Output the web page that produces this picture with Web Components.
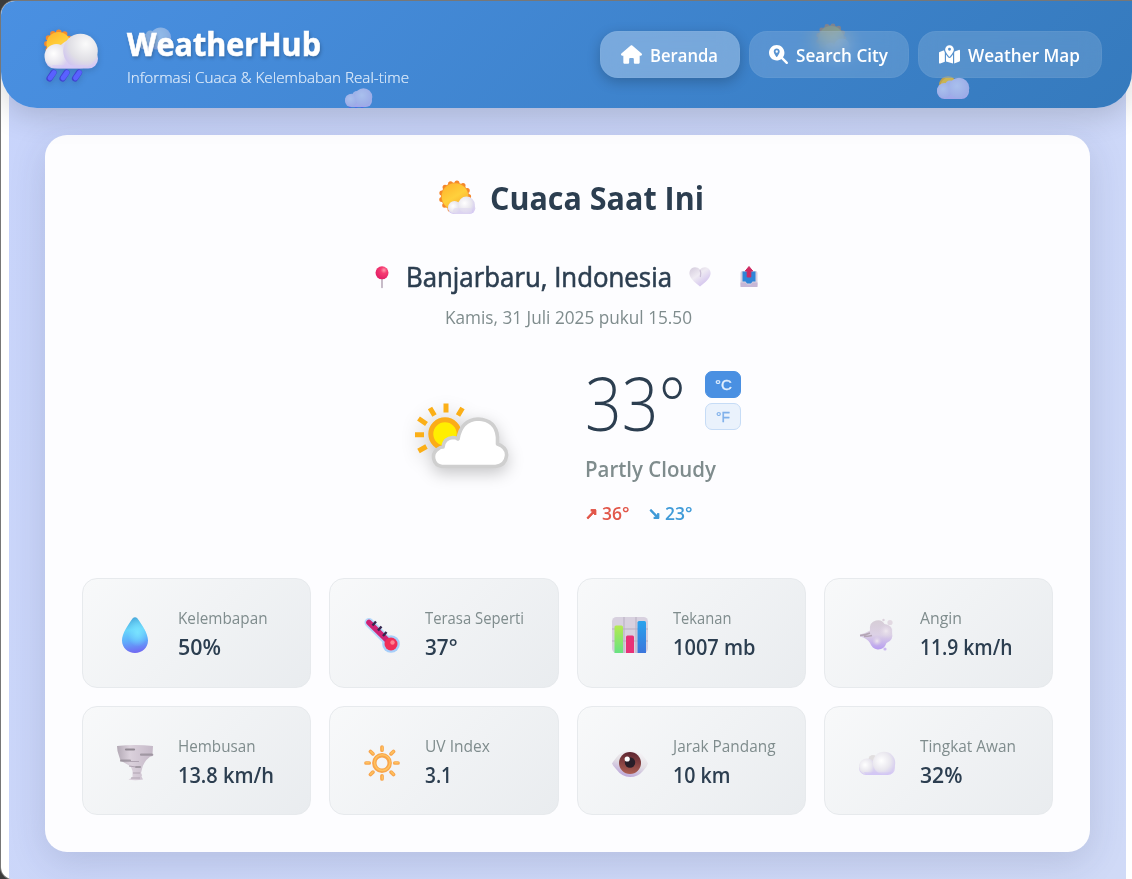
<!DOCTYPE html>
<html lang="id">
<head>
<meta charset="utf-8">
<title>WeatherHub</title>
<style>
html{background:#3b3b3b}
body{margin:0;height:879px;overflow:hidden;font-family:"Open Sans","Noto Sans",sans-serif;color:#2c3e50}
</style>
</head>
<body>
<weather-app></weather-app>
<script>
const define = (name, html, ready) => {
  const t = document.createElement('template');
  t.innerHTML = html;
  customElements.define(name, class extends HTMLElement {
    connectedCallback() {
      if (this.shadowRoot) return;
      this.attachShadow({mode: 'open'}).append(t.content.cloneNode(true));
      if (ready) ready(this, this.shadowRoot);
    }
  });
};

const cloudDefs = `<defs>
<radialGradient id="c1" cx=".38" cy=".4" r=".75"><stop offset="0" stop-color="#fff"/><stop offset=".55" stop-color="#e9e7ee"/><stop offset="1" stop-color="#cfc3f0"/></radialGradient>
<radialGradient id="c2" cx=".65" cy=".3" r=".8"><stop offset="0" stop-color="#fbfbfb"/><stop offset=".6" stop-color="#e0dfe5"/><stop offset="1" stop-color="#cdc0f2"/></radialGradient>
<linearGradient id="cb" x1="0" y1="0" x2="0" y2="1"><stop offset="0" stop-color="#e5e3ea"/><stop offset="1" stop-color="#d3c5f5"/></linearGradient>
<linearGradient id="s" x1=".2" y1="0" x2=".8" y2="1"><stop offset="0" stop-color="#ffb52c"/><stop offset=".5" stop-color="#ffd03c"/><stop offset="1" stop-color="#f8a52b"/></linearGradient></defs>`;

const hazeDefs = `<defs><linearGradient id="z" x2="0" y2="1"><stop stop-color="#a6bdea"/><stop offset="1" stop-color="#a0a6ea"/></linearGradient><radialGradient id="z1" cx=".4" cy=".4" r=".7"><stop stop-color="#a9c0ed"/><stop offset="1" stop-color="#9aa9e6"/></radialGradient></defs>`;

const ICONS = {
  rain: ['0 0 54 54', `${cloudDefs}
    <circle cx="14.5" cy="15" r="11.600" fill="none" stroke="#f58a2c" stroke-width="5.600" stroke-linecap="round" stroke-dasharray="0 6.070"/><circle cx="14.5" cy="15" r="12" fill="url(#s)"/>
    <path d="M12 24C17 12 26 8 37 12V39H10Z" fill="url(#cb)"/><rect x="1" y="20" width="53" height="19.5" rx="9.7" fill="url(#cb)"/>
    <circle cx="12.5" cy="27" r="12" fill="url(#c1)"/><circle cx="36.5" cy="22" r="17.3" fill="url(#c2)"/><path d="M8 36h36q-6 3.5-11 3.5H14q-4 0-6-3.5Z" fill="#d6c8f7" opacity=".55"/>
    <g stroke="#3f43cf" stroke-width="6.2" stroke-linecap="round"><path d="M9.500 43.500l-4 6M22.500 43.500l-4 6M35 43.500l-4 6"/></g><g stroke="#5961ff" stroke-width="4.800" stroke-linecap="round"><path d="M10 43.500l-4 5.500M23 43.500l-4 5.500M35.500 43.500l-4 5.500"/></g>`],
  'haze-rain': ['0 0 28 28', `${hazeDefs}<rect x="0" y="6.500" width="27" height="12.500" rx="6.200" fill="url(#z)"/><circle cx="12" cy="8" r="5" fill="#9db2e8"/><circle cx="6.500" cy="12" r="6.300" fill="url(#z1)"/><circle cx="18.500" cy="9" r="8.800" fill="url(#z1)"/><path d="M5 20.500l-2 3M11 20.500l-2 3M17 20.500l-2 3" stroke="#4c63ea" stroke-width="3" stroke-linecap="round"/>`],
  'haze-sun': ['0 0 32 32', `${hazeDefs}<circle cx="11" cy="14" r="9" fill="#bda04e"/><circle cx="12" cy="15" r="8.500" fill="#c9b455"/><rect x="0" y="13" width="32" height="15" rx="7.500" fill="url(#z)"/><circle cx="13" cy="14.500" r="5" fill="#9db2e8"/><circle cx="7.500" cy="19.500" r="7.500" fill="url(#z1)"/><circle cx="22" cy="17" r="10.300" fill="url(#z1)"/>`],
  sunny: ['0 0 36 36', `${cloudDefs}
    <circle cx="16" cy="17.500" r="13.600" fill="none" stroke="#f5862a" stroke-width="5" stroke-linecap="round" stroke-dasharray="0 6.570"/><circle cx="16" cy="17.500" r="14" fill="#f5932c"/><circle cx="16" cy="17.500" r="13.300" fill="url(#s)"/>
    <rect x="9" y="23.500" width="27.300" height="11.500" rx="5.700" fill="url(#cb)"/><circle cx="15.500" cy="28.300" r="6.300" fill="url(#c1)"/><circle cx="27.500" cy="25.800" r="8.300" fill="url(#c1)"/><rect x="14" y="29" width="19" height="6" rx="3" fill="#e0daef" opacity=".65"/>`],
  cloud: ['0 0 36 36', `${cloudDefs}<rect x="0" y="15.500" width="36" height="14.500" rx="7.200" fill="url(#cb)"/>
    <circle cx="14" cy="14.500" r="4.500" fill="#e1dedf"/><circle cx="8" cy="21.500" r="8" fill="url(#c1)"/><circle cx="25" cy="18" r="11.200" fill="url(#c1)"/><path d="M5 27q13 1 28 0-3 3-7 3H9q-3 0-4-3Z" fill="#d2c6f5" opacity=".6"/>`],
  pin: ['0 0 22 22', `<defs><radialGradient id="p" cx=".65" cy=".3" r=".7"><stop offset="0" stop-color="#ff9aae"/><stop offset=".35" stop-color="#f63c72"/><stop offset="1" stop-color="#e32067"/></radialGradient></defs>
    <path d="M11 12v9.500" stroke="#b9abbb" stroke-width="1.600" stroke-linecap="round"/><circle cx="11" cy="6.800" r="6.500" fill="url(#p)"/>`],
  heart: ['0 0 22 22', `<defs><linearGradient id="h" x1="0" x2=".8" y2="1"><stop stop-color="#d3cadc"/><stop offset=".45" stop-color="#efebf3"/><stop offset="1" stop-color="#cdbbed"/></linearGradient></defs>
    <path d="M11 3.600C8 .300 3 .500 1 4.500-.800 8.500 1 13 11 20.500 21 13 22.800 8.500 21 4.500 19 .500 14 .300 11 3.600Z" fill="url(#h)"/><path d="M11 4c1.300 2.500 1 4.500.3 7" stroke="#cdc2d8" stroke-width="1.300" fill="none"/>`],
  outbox: ['0 0 22 22', `<rect x="2.500" y="5" width="17" height="16" rx="2" fill="#d9d0df"/><path d="M2.500 16.500h5l1.500 2h4l1.500-2h5V21h-17Z" fill="#c7b7d6"/><path d="M4.500 5.500h13v10h-3l-1.500 2H9l-1.500-2h-3Z" fill="#2f85d8"/>
    <path d="M11 0.500l3.700 4.500h-1.900v6H9.200V5H7.300Z" fill="#cf2a62" stroke="#cf2a62" stroke-width="1" stroke-linejoin="round"/>`],
  drop: ['0 0 36 36', `<defs><linearGradient id="d" x1=".4" y1="0" x2=".5" y2="1"><stop stop-color="#4aa9dc"/><stop offset=".35" stop-color="#68d5fb"/><stop offset=".65" stop-color="#5faefb"/><stop offset="1" stop-color="#7167f2"/></linearGradient><radialGradient id="dg" cx=".6" cy=".42" r=".4"><stop stop-color="#78e2ff"/><stop offset="1" stop-color="#78e2ff" stop-opacity="0"/></radialGradient></defs>
    <path d="M15.500 1.600Q18 -1 20.500 1.600C25 8 31 16.500 31 23.500 31 31 25 36 18 36S5 31 5 23.500C5 16.500 11 8 15.500 1.600Z" fill="url(#d)"/><path d="M15.500 1.600Q18 -1 20.500 1.600C25 8 31 16.500 31 23.500 31 31 25 36 18 36S5 31 5 23.500C5 16.500 11 8 15.500 1.600Z" fill="url(#dg)"/>`],
  thermo: ['0 0 36 36', `<g stroke-linecap="round"><path d="M5 5.500L26 26.500" stroke="#b5d9fb" stroke-width="9"/><circle cx="27" cy="27" r="8.800" fill="#a6cffa"/><path d="M5 5.500L25 25" stroke="#ce2274" stroke-width="5.600"/></g>
    <circle cx="27" cy="27" r="6.500" fill="#f02f58"/><circle cx="28.500" cy="25.500" r="2.200" fill="#ff8291"/><path d="M12 4.500l-3.500 4M17.500 9.500l-3.500 4M22.500 15l-3.500 4" stroke="#35264e" stroke-width="2.400"/>`],
  chart: ['0 0 36 36', `<defs><linearGradient id="g" x2="0" y2="1"><stop stop-color="#b4ea50"/><stop offset="1" stop-color="#68e282"/></linearGradient><linearGradient id="b" x2="0" y2="1"><stop stop-color="#2aa3ec"/><stop offset="1" stop-color="#3c76dc"/></linearGradient></defs>
    <rect width="36" height="36" rx="4.500" fill="#d8d1df"/><path d="M0 12h36M0 24h36M12 0v36M24 0v36" stroke="#b7afc1" stroke-width="1"/>
    <path d="M2.500 36V10q0-1.500 1.500-1.500h5.500q1.500 0 1.500 1.500V36Z" fill="url(#g)"/><path d="M14 36V20q0-1.500 1.500-1.500h5q1.500 0 1.500 1.500V36Z" fill="#e83177"/><path d="M25.500 36V5.500Q25.500 4 27 4h5.500Q34 4 34 5.500V36Z" fill="url(#b)"/>`],
  wind: ['0 0 36 36', `<defs><linearGradient id="w" x1=".5" x2=".5" y2="1"><stop stop-color="#d6cdd6"/><stop offset=".5" stop-color="#dcd1e5"/><stop offset="1" stop-color="#b79cf0"/></linearGradient><radialGradient id="w2"><stop stop-color="#efe8ef"/><stop offset="1" stop-color="#dcd1e5" stop-opacity="0"/></radialGradient></defs>
    <path d="M1 17.500Q6 16.500 11 13.500Q10 5 17 3.500Q23 2 25.500 7Q34 8 33 15.500Q35 23 27.500 26Q25 33 18.500 32.500Q13 31.500 11 26Q8 21 1 19.500Z" fill="url(#w)"/><circle cx="27" cy="14" r="7.500" fill="url(#w2)"/><circle cx="18" cy="24" r="5" fill="url(#w2)"/>
    <path d="M1 18.500q6-.5 10-2.500M5 19.500q4 0 8-1" stroke="#b4a6b5" stroke-width="1.400" fill="none"/><circle cx="31" cy="5.500" r="2.600" fill="#e2d9e2"/><circle cx="24.500" cy="3" r="1.200" fill="#dcd1dc"/><circle cx="26" cy="32" r="1.600" fill="#cbb8f0"/>`],
  tornado: ['0 0 36 36', `<defs><linearGradient id="t" x2="1"><stop stop-color="#b3a9b5"/><stop offset=".35" stop-color="#dbd1dc"/><stop offset="1" stop-color="#c4b8c7"/></linearGradient></defs>
    <path d="M0 1q18-2 36 0l-.5 8.500h1.500q-1 2-4 2.200-4 3-5.500 6-2 3-2.500 6.300l-1 4q1.500 2 .5 3.500l1.500 3q-8 1.500-14.500 0 3-1.500 4-2.500v-6q-1-3.500-2.500-5L7 17.500 3.500 15.500 2 11Q0 6 0 1Z" fill="url(#t)"/>
    <g stroke="#8f8791" stroke-width="2.200" stroke-linecap="round"><path d="M9 4.500h8" /><path d="M24 9.700h11M4 15.700h9M19 22h4" opacity=".7"/></g><g stroke="#b0a4b2" stroke-width="1.200"><path d="M13 16.500h9M12 21l7 1M14 33h9M16 28h7"/></g>`],
  uv: ['0 0 36 36', `<g fill="none" stroke="#f8a54c" stroke-linecap="round"><circle cx="18" cy="18" r="7.700" stroke-width="4.400"/><path stroke-width="3.700" d="M18 2v3.200M18 30.800V34M2 18h3.200M30.800 18H34M6.500 6.500l2.400 2.400M27.100 27.100l2.400 2.400M6.500 29.500l2.400-2.400M27.100 8.900l2.400-2.400"/></g><g fill="none" stroke="#ffc25e" stroke-linecap="round"><circle cx="18.300" cy="17.600" r="7.800" stroke-width="1.500"/><path stroke-width="1.500" d="M18.300 2v3M18.300 31v3M2 17.700h3M31 17.700h3M6.700 6.500l2.400 2.200M27.400 27l2.100 2.200M6.700 29.200l2.200-2.200M27.200 8.600l2.300-2.200"/></g>`],
  eye: ['0 0 36 36', `<defs><linearGradient id="e" x1=".7" x2=".3" y2="1"><stop stop-color="#f7f5f7"/><stop offset=".5" stop-color="#e2dee4"/><stop offset="1" stop-color="#b9a2d8"/></linearGradient><linearGradient id="i" x1=".5" x2=".4" y2="1"><stop stop-color="#5e2430"/><stop offset="1" stop-color="#ad5f52"/></linearGradient></defs>
    <path d="M0 18.500Q1 16.500 4 13 10 5 19 5T32 12Q35 15.500 36 18.500 35 22 31 26 26 32 18 32T4 24Q1 21 0 18.500Z" fill="url(#e)"/><circle cx="18" cy="18" r="11" fill="url(#i)"/><circle cx="18" cy="17.500" r="5.200" fill="#281e28"/><circle cx="15.200" cy="14" r="2.600" fill="#fff"/>`],
  partly: ['24 48 96 80', `<g stroke="#fbaf17" stroke-width="5"><path d="M56 52.500v9M40 57l4.500 7.500M72.500 57l-4.500 7.500M28.500 67.500l8 5.500M25 83.800h9M28.500 100l8-4.500"/></g>
    <circle cx="55" cy="83" r="14.200" fill="#ffee00" stroke="#fbac18" stroke-width="5"/>
    <path d="M52 115.500a9.500 9.500 0 0 1-4-17.500q2-2 5-2 1-9 10-9.500 3 0 5 1.500 3-19 20-20 18 1 19.500 18v7q10 3.500 9 12-1 9.500-11 10.500Z" fill="#fff" stroke="#cfcfcf" stroke-width="3.600" stroke-linejoin="round"/>`],
  house: ['0 0 576 512', `<path fill="#fff" d="M575.8 255.5c0 18-15 32.1-32 32.1h-32l.7 160.2c0 2.700-.2 5.400-.5 8.100V472c0 22.100-17.900 40-40 40H392c-22.100 0-40-17.900-40-40V384c0-17.700-14.300-32-32-32H256c-17.700 0-32 14.300-32 32v88c0 22.100-17.900 40-40 40H104c-22.100 0-40-17.900-40-40V287.600H32c-18 0-32-14-32-32.100c0-9 3-17 10-24L266.400 8c7-7 15-8 22-8s15 2 21 7L564.800 231.500c8 7 12 15 11 24z"/>`],
  search: ['0 0 512 512', `<path fill="#fff" fill-rule="evenodd" d="M416 208c0 45.900-14.900 88.300-40 122.700L502.600 457.400c12.500 12.500 12.500 32.800 0 45.300s-32.800 12.500-45.300 0L330.700 376c-34.400 25.200-76.800 40-122.700 40C93.100 416 0 322.900 0 208S93.100 0 208 0S416 93.100 416 208zM288 176c0-44.200-35.800-80-80-80s-80 35.800-80 80c0 48.800 46.500 111.600 68.600 138.600c6 7.300 16.800 7.300 22.700 0c22.100-27 68.600-89.800 68.600-138.600zm-112 0a32 32 0 1 1 64 0 32 32 0 1 1 -64 0z"/>`],
  map: ['0 0 576 512', `<path fill="#fff" fill-rule="evenodd" d="M408 120c0 54.600-73.100 151.900-105.200 192c-7.700 9.600-22 9.600-29.600 0C241.100 271.900 168 174.600 168 120C168 53.700 221.700 0 288 0s120 53.700 120 120zm8 80.400c3.500-6.900 6.700-13.800 9.600-20.600c.5-1.200 1-2.500 1.500-3.700l116-46.400C558.900 123.400 576 135 576 152V422.800c0 9.800-6 18.600-15.100 22.300L416 503V200.400zM137.600 138.300c2.400 14.100 7.200 28.300 12.800 41.500c2.900 6.800 6.100 13.700 9.600 20.600V451.800L32.900 502.700C17.100 509 0 497.400 0 480.400V209.600c0-9.800 6-18.600 15.100-22.300l122.600-49zM327.800 332c13.900-17.400 35.700-45.700 56.200-77V504.300L192 449.400V255c20.500 31.300 42.300 59.600 56.200 77c20.500 25.600 59.100 25.600 79.600 0zM288 152a40 40 0 1 0 0-80 40 40 0 1 0 0 80z"/>`]
};

define('wx-icon', `<style>:host{display:block;flex:none}svg{display:block;width:100%;height:100%;overflow:visible}</style><slot></slot>`, (el, root) => {
  const [box, art] = ICONS[el.getAttribute('name')];
  root.innerHTML += `<svg viewBox="${box}">${art}</svg>`;
});

/* A single line of text condensed or widened to an exact width. */
define('fit-text', `<style>:host{display:block;flex:none;white-space:nowrap}span{display:inline-block;transform-origin:0 50%}</style><span><slot></slot></span>`, (el, root) => {
  const w = +el.getAttribute('w'), s = root.querySelector('span');
  el.style.width = w + 'px';
  s.style.transform = `scaleX(${w / s.getBoundingClientRect().width})`;
});

define('nav-button', `<style>
:host{display:flex;align-items:center;box-sizing:border-box;height:47px;padding:0 0 0 20px;border-radius:18px;border:1px solid rgba(255,255,255,.04);background:rgba(255,255,255,.15);backdrop-filter:blur(10px);color:#fff;font-size:17.400px;font-weight:600;line-height:24px;position:relative}
:host([active]){background:rgba(255,255,255,.3);box-shadow:0 4px 13px rgba(0,0,0,.22)}
</style><slot></slot>`);

define('app-header', `<style>
:host{display:flex;box-sizing:border-box;height:107px;padding:0 30.500px 0 43px;align-items:center;justify-content:space-between;background:linear-gradient(135deg,#4a90e2,#357abd);border-radius:14px 0 36px 36px;box-shadow:0 8px 30px rgba(0,0,0,.16);position:relative;z-index:2;color:#fff}
.float{position:absolute;inset:0;overflow:hidden;border-radius:inherit}
.float wx-icon{position:absolute}
.brand{display:flex;align-items:center;gap:28.500px;position:relative}
.logo{width:54px;height:54px;margin-top:2px;filter:drop-shadow(0 2px 3px rgba(0,0,0,.15))}
.names{padding-top:4px}
.name{font-size:31.400px;font-weight:700;line-height:36px;text-shadow:1px 2px 4px rgba(0,0,0,.28);-webkit-text-stroke:.6px #fff}
.tag{font-size:15.200px;font-weight:300;line-height:20px;margin-top:5px;color:#e4effb;-webkit-text-stroke:.2px #d5e6f9}
nav{display:flex;gap:9px}
</style>
<div class="float">
<wx-icon name="cloud" style="left:136px;top:20px;width:34px;height:34px;opacity:.42"></wx-icon>
<wx-icon name="haze-rain" style="left:344px;top:87px;width:28px;height:28px"></wx-icon>
<wx-icon name="sunny" style="left:815px;top:21px;width:34px;height:34px;opacity:.36"></wx-icon>
<wx-icon name="haze-sun" style="left:935.500px;top:69.500px;width:32px;height:32px"></wx-icon>
</div>
<div class="brand"><wx-icon class="logo" name="rain"></wx-icon><div class="names"><fit-text class="name" w="194">WeatherHub</fit-text><fit-text class="tag" w="282">Informasi Cuaca &amp; Kelembaban Real-time</fit-text></div></div>
<nav>
<nav-button active style="width:140px"><wx-icon name="house" style="width:21px;height:19px;margin-right:8px"></wx-icon><fit-text w="68">Beranda</fit-text></nav-button>
<nav-button style="width:160px;padding-left:19px"><wx-icon name="search" style="width:19px;height:19px;margin-right:8px"></wx-icon><fit-text w="92">Search City</fit-text></nav-button>
<nav-button style="width:184px"><wx-icon name="map" style="width:21px;height:19px;margin-right:8px"></wx-icon><fit-text w="112">Weather Map</fit-text></nav-button>
</nav>`);

define('stat-tile', `<style>
:host{display:flex;align-items:center;gap:25px;box-sizing:border-box;padding-left:34px;border:1px solid #e7eaed;border-radius:15px;background:linear-gradient(135deg,#f8f9fa,#e9ecef)}
wx-icon{width:36px;height:36px;margin-top:4px}
.label{font-size:15.500px;line-height:22px;color:#7f8c8d}
.value{font-size:21.400px;font-weight:600;line-height:28px;margin-top:4px;color:#2c3e50}
.text{padding-top:2px}
</style><div class="icon"></div><div class="text"></div>`, (el, root) => {
  const a = n => el.getAttribute(n);
  root.querySelector('.icon').innerHTML = `<wx-icon name="${a('icon')}"></wx-icon>`;
  root.querySelector('.text').innerHTML = `<fit-text class="label" w="${a('lw')}">${a('label')}</fit-text><fit-text class="value" w="${a('vw')}">${a('value')}</fit-text>`;
});

define('unit-button', `<style>
:host{display:flex;align-items:center;justify-content:center;box-sizing:border-box;width:36px;height:27px;border-radius:7px;border:1px solid #c6dcf6;background:#eaf2fc;color:#7fb0ea;font-family:"Liberation Sans",sans-serif;font-size:14.500px;line-height:18px;-webkit-text-stroke:.3px}
:host([active]){background:#4a90e2;border-color:#4a90e2;color:#e3effd}
</style><slot></slot>`);

define('current-weather', `<style>
:host{display:block;box-sizing:border-box;height:717px;margin:0 36px;padding:43px 37px 0;background:#fdfdff;border-radius:22px;box-shadow:0 10px 36px rgba(40,50,90,.15)}
.row{display:flex;justify-content:center}
.title{align-items:center;gap:15px;padding-left:8px;height:40px;line-height:40px;font-size:31.400px;font-weight:700}
.title wx-icon{width:36px;height:36px;margin-bottom:3px}
.place{align-items:center;margin:41px 5px 0 0;height:36px;line-height:36px;font-size:26.600px;-webkit-text-stroke:.6px #2c3e50}
.place wx-icon{width:22px;height:22px}
.date{margin-top:10px;padding-left:1px;line-height:24px;font-size:17.400px;color:#7f8c8d}
.now{align-items:center;gap:75px;padding-left:20px;margin:42px 0 53px;height:154px}
.now>wx-icon{width:96px;height:80px;margin-bottom:19px;filter:drop-shadow(0 5px 8px rgba(0,0,0,.22))}
.info{width:156px}
.temp{display:flex;justify-content:space-between;height:64px}
.deg{font-size:73px;font-weight:300;line-height:64px}
.units{display:flex;flex-direction:column;gap:5px}
.cond{margin-top:20px;font-size:21.800px;font-weight:600;line-height:28px;color:#7f8c8d}
.range{display:flex;margin-top:17.500px;line-height:24px;font-size:17.400px;font-weight:600}
.hi{color:#e2574a}.lo{color:#409bd8}
.arrow{margin-right:4.500px;font-size:16px;-webkit-text-stroke:.3px}
.grid{display:grid;grid-template-columns:repeat(4,1fr);grid-template-rows:110px 109px;gap:18px}
</style>
<div class="row title"><wx-icon name="sunny"></wx-icon><fit-text w="214">Cuaca Saat Ini</fit-text></div>
<div class="row place"><wx-icon name="pin"></wx-icon><fit-text w="266" style="margin:0 17px 0 13px">Banjarbaru, Indonesia</fit-text><wx-icon name="heart"></wx-icon><wx-icon name="outbox" style="margin-left:27px"></wx-icon></div>
<div class="row date"><fit-text w="247">Kamis, 31 Juli 2025 pukul 15.50</fit-text></div>
<div class="row now"><wx-icon name="partly"></wx-icon>
<div class="info"><div class="temp"><fit-text class="deg" w="101">33°</fit-text><div class="units"><unit-button active><fit-text w="17">°C</fit-text></unit-button><unit-button><fit-text w="14">°F</fit-text></unit-button></div></div>
<fit-text class="cond" w="131">Partly Cloudy</fit-text>
<div class="range"><fit-text class="hi arrow" w="12.500">↗</fit-text><fit-text class="hi" w="27.500">36°</fit-text><fit-text class="lo arrow" w="12.500" style="margin-left:18px">↘</fit-text><fit-text class="lo" w="27.500">23°</fit-text></div></div></div>
<div class="grid">
<stat-tile icon="drop" label="Kelembapan" lw="89.500" value="50%" vw="43"></stat-tile>
<stat-tile icon="thermo" label="Terasa Seperti" lw="99" value="37°" vw="32.500"></stat-tile>
<stat-tile icon="chart" label="Tekanan" lw="58.500" value="1007 mb" vw="82.500"></stat-tile>
<stat-tile icon="wind" label="Angin" lw="42" value="11.9 km/h" vw="92.500"></stat-tile>
<stat-tile icon="tornado" label="Hembusan" lw="77.500" value="13.8 km/h" vw="96"></stat-tile>
<stat-tile icon="uv" label="UV Index" lw="65" value="3.1" vw="27"></stat-tile>
<stat-tile icon="eye" label="Jarak Pandang" lw="102.500" value="10 km" vw="57.500"></stat-tile>
<stat-tile icon="cloud" label="Tingkat Awan" lw="96" value="32%" vw="42.500"></stat-tile>
</div>`);

define('weather-app', `<style>
:host{display:block;box-sizing:border-box;height:879px;padding:1px 0 0 1px}
.window{height:878px;background:#fff;border-radius:14px 0 0 12px;overflow:hidden;box-shadow:0 0 0 1px #777}
main{box-sizing:border-box;margin:-30px 6px 0 8px;height:802px;padding-top:57px;background:linear-gradient(135deg,#c8d4fb,#d0daf7);overflow:hidden}
</style><div class="window"><app-header></app-header><main><current-weather></current-weather></main></div>`);
</script>
</body>
</html>
